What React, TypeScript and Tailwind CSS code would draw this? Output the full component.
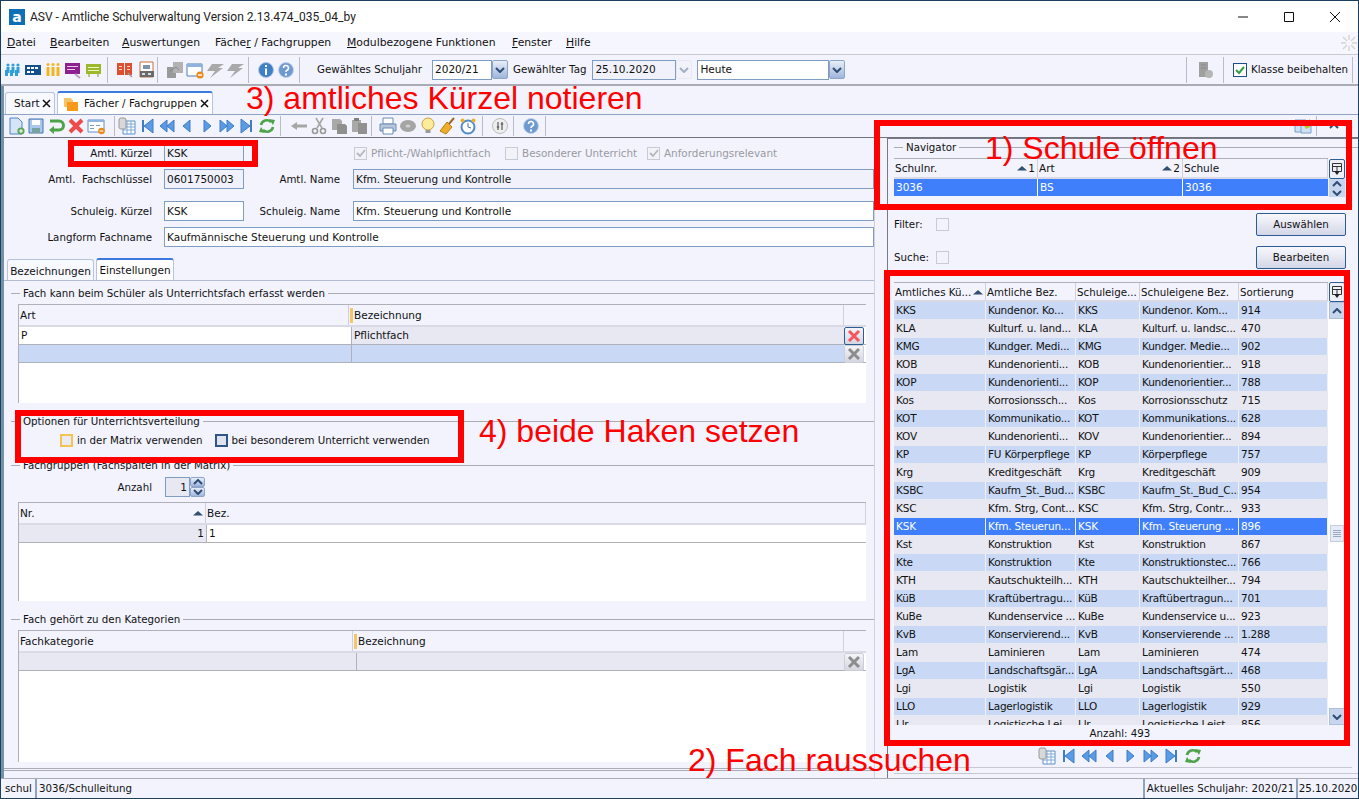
import React from "react";

type IconProps = { children: React.ReactNode; w?: number };

const I = ({ children, w = 18 }: IconProps) => (
    <svg width={w} height={18} viewBox={`0 0 ${w} 18`} className="shrink-0">
        {children}
    </svg>
);

const Blue = "#5b9be6";
const BlueD = "#3f7cc4";

const icons: Record<string, React.ReactNode> = {
    people: <I><g fill="#2f9fd8"><circle cx="4" cy="4" r="1.6" /><circle cx="9" cy="4" r="1.6" /><circle cx="14" cy="4" r="1.6" /><rect x="2.5" y="6" width="3" height="6" /><rect x="7.5" y="6" width="3" height="6" /><rect x="12.5" y="6" width="3" height="6" /><rect x="1" y="9" width="3" height="6" /><rect x="6" y="9" width="3" height="6" /><rect x="11" y="9" width="3" height="6" /></g></I>,
    card: <I><path d="M1 4h16v10H1z" fill="#14508c" /><path d="M3 6h3v2H3zM7 6h3v2H7zM11 6h3v2h-3zM3 10h3v2H3zM7 10h3v2H7z" fill="#fff" /></I>,
    yellow: <I><g fill="#f2b61c"><circle cx="4" cy="3.5" r="1.5" /><circle cx="9" cy="3.5" r="1.5" /><circle cx="14" cy="3.5" r="1.5" /><rect x="2.5" y="6" width="3" height="9" /><rect x="7.5" y="6" width="3" height="9" /><rect x="12.5" y="6" width="3" height="9" /></g></I>,
    purple: <I><path d="M1 2h15v11H1z" fill="#8e1f8e" /><path d="M3 5h11v1H3zM3 8h8v1H3z" fill="#e9c6e9" /><path d="M11 13l5 4" stroke="#b9a0c9" strokeWidth="2" /></I>,
    green: <I><path d="M2 3h15v10H2z" fill="#9cb82c" /><path d="M4 6h11v1H4zM4 9h11v1H4z" fill="#eef4c4" /><path d="M5 13v3M14 13v3" stroke="#7f9a1c" /></I>,
    book: <I><path d="M1 2h7v12H1zM9 2h7v12H9z" fill="#dd4f2e" /><path d="M3 5h3v1H3zM11 5h3v1h-3zM3 8h3v1H3zM11 8h3v1h-3z" fill="#fbd7c8" /><path d="M12 12l4 4" stroke="#9a9a9a" strokeWidth="1.5" /></I>,
    note: <I><path d="M3 1h13v15H3z" fill="#fff" stroke="#c8703c" /><path d="M6 4h7v4H6z" fill="#7f93ad" /><path d="M3 10h14v6H3z" fill="#6a6a6a" /><path d="M5 12h3v2H5zM11 12h3v2h-3z" fill="#ddd" /></I>,
    puzzle: <I><path d="M1 6h9v11H1z" fill="#9a9a9a" /><path d="M7 1h10v11H7z" fill="#b2b2b2" /><path d="M4 10l6-4 3 3" stroke="#8a8a8a" fill="none" /></I>,
    winMinus: <I><path d="M1 3h15v12H1z" fill="#fff" stroke="#4d7fb8" /><path d="M1 3h15v3H1z" fill="#8fb3dd" /><circle cx="14" cy="14" r="3.6" fill="#e98a1c" /><path d="M12 14h4" stroke="#fff" strokeWidth="1.4" /></I>,
    bolt: <I><path d="M6 3h12l-6 4h5L4 17l5-7H1z" fill="#a9a9a9" /></I>,
    info: <I><circle cx="9" cy="9" r="7.5" fill="#3f7fc6" stroke="#b6c9e5" /><path d="M8 7.5h2V14H8zM8 4h2v2H8z" fill="#fff" /></I>,
    help: <I><circle cx="9" cy="9" r="7.5" fill="#6f9ad0" stroke="#c3d3ea" /><path d="M6.5 7a2.5 2.5 0 1 1 3.5 2.3c-.7.3-1 .7-1 1.7" stroke="#fff" strokeWidth="1.6" fill="none" /><path d="M8 12.5h2v2H8z" fill="#fff" /></I>,
    fileNew: <I><path d="M3 1h8l4 4v12H3z" fill="#d5e4f6" stroke="#4f86c4" /><circle cx="14" cy="14" r="3.6" fill="#5aa65a" /><path d="M12 14h4M14 12v4" stroke="#fff" /></I>,
    save: <I><path d="M2 2h14v14H2z" fill="#a9c8ec" stroke="#4577b0" /><path d="M5 3h8v5H5z" fill="#fff" /><path d="M5 11h8v5H5z" fill="#78a2a0" /></I>,
    undo: <I><path d="M3 4h9a4 4 0 0 1 0 9H5" stroke="#4da24a" strokeWidth="3" fill="none" /><path d="M7 9l-5 4 5 4z" fill="#4da24a" /></I>,
    redX: <I><path d="M3 3l12 12M15 3L3 15" stroke="#ee4b4b" strokeWidth="4" /></I>,
    form: <I><path d="M1 3h16v12H1z" fill="#fff" stroke="#5d8fc4" /><path d="M1 3h16v2H1z" fill="#8fb3dd" /><path d="M3 8h4v1H3zM3 11h4v1H3zM9 8h4v1H9z" fill="#7a9cc4" /><circle cx="14.5" cy="14" r="3.3" fill="#e98a1c" /><path d="M12.7 14h3.6" stroke="#fff" /></I>,
    copyTable: <I><path d="M5 4h12v13H5z" fill="#fff" stroke="#5d8fc4" /><path d="M5 7h12M5 10h12M5 13h12M9 4v13M13 4v13" stroke="#7eaad8" /><rect x="1" y="1" width="7" height="11" rx="2" fill="#d8d8d8" stroke="#999" /></I>,
    first: <I><path d="M4 3h2v12H4z" fill={BlueD} /><path d="M15 2v14L6 9z" fill={Blue} stroke={BlueD} /></I>,
    prev2: <I><path d="M9 3v12L2 9zM16 3v12L9 9z" fill={Blue} stroke={BlueD} /></I>,
    prev: <I><path d="M12 3v12L5 9z" fill={Blue} stroke={BlueD} /></I>,
    next: <I><path d="M6 3v12l7-6z" fill={Blue} stroke={BlueD} /></I>,
    next2: <I><path d="M2 3v12l7-6zM9 3v12l7-6z" fill={Blue} stroke={BlueD} /></I>,
    last: <I><path d="M12 3h2v12h-2z" fill={BlueD} /><path d="M3 2v14l9-7z" fill={Blue} stroke={BlueD} /></I>,
    refresh: <I><path d="M3 8a6 6 0 0 1 10-3" stroke="#4da24a" strokeWidth="2.6" fill="none" /><path d="M11 2l6 1-2 5z" fill="#4da24a" /><path d="M15 10a6 6 0 0 1-10 3" stroke="#4da24a" strokeWidth="2.6" fill="none" /><path d="M7 16l-6-1 2-5z" fill="#4da24a" /></I>,
    back: <I><path d="M7 5v8L1 9z" fill="#a6a6a6" /><path d="M6 7.5h11v3H6z" fill="#a6a6a6" /></I>,
    scissors: <I><path d="M13 1L7 11M6 1l6 10" stroke="#a6a6a6" strokeWidth="1.6" /><circle cx="5" cy="14" r="2.5" fill="none" stroke="#999" strokeWidth="1.6" /><circle cx="13" cy="14" r="2.5" fill="none" stroke="#999" strokeWidth="1.6" /></I>,
    copy: <I><path d="M2 2h8l2 2v9H2z" fill="#a9a9a9" /><path d="M7 7h8l2 2v8H7z" fill="#8f8f8f" /></I>,
    paste: <I><path d="M2 3h9v12H2z" fill="#a9a9a9" /><path d="M8 6h9v11H8z" fill="#919191" /><path d="M4 1h5v3H4z" fill="#7f7f7f" /></I>,
    printer: <I><path d="M4 1h10v6H4z" fill="#fff" stroke="#6c8cb4" /><path d="M1 7h16v7H1z" fill="#b7c6da" stroke="#6c8cb4" /><path d="M4 11h10v6H4z" fill="#fff" stroke="#6c8cb4" /></I>,
    disc: <I><ellipse cx="9" cy="9" rx="8" ry="6" fill="#a5a5a5" /><ellipse cx="9" cy="9" rx="2.5" ry="1.6" fill="#cfcfcf" /></I>,
    bulb: <I><circle cx="9" cy="7" r="6" fill="#fdeb9c" stroke="#c9a33a" /><path d="M6.5 13h5v3h-5z" fill="#9a9a9a" /></I>,
    broom: <I><path d="M15 1L9 8" stroke="#9a6a2a" strokeWidth="2" /><path d="M8 5l5 5-6 7-6-3z" fill="#eeae2c" stroke="#b87e14" /></I>,
    clock: <I><circle cx="9" cy="10" r="6.5" fill="#fff" stroke="#4f8cc9" strokeWidth="2" /><path d="M9 6v4l3 1" stroke="#4f6f94" fill="none" /><circle cx="3.5" cy="3.5" r="2" fill="#eeae2c" /><circle cx="14.5" cy="3.5" r="2" fill="#eeae2c" /></I>,
    sliders: <I><circle cx="9" cy="9" r="7.5" fill="#eee" stroke="#bbb" /><path d="M7 5v8M11 5v8" stroke="#666" strokeWidth="1.3" /><path d="M5.8 10h2.4M9.8 7h2.4" stroke="#666" strokeWidth="1.5" /></I>,
    server: <I><path d="M3 1h9v15H3z" fill="#a0a0a0" /><circle cx="13" cy="13" r="4" fill="#b5b5b5" /><path d="M5 4h5M5 7h5" stroke="#8a8a8a" /></I>,
    panel: <I><path d="M1 3h11v12H1z" fill="#cfe0f4" stroke="#7ba0cc" /><path d="M7 6h10v10H7z" fill="#cfe0f4" stroke="#7ba0cc" /><path d="M9 7l7-5v8l-4 2z" fill="#b9c93a" /></I>,
};

const Sep = ({ h = "h-[26px]", m = "" }: { h?: string; m?: string }) => (
    <div className={`w-px shrink-0 bg-[#b9bbc6] ${h} ${m}`} />
);

const IconRow = ({ names, cell = "w-5" }: { names: string[]; cell?: string }) => (
    <div className="flex shrink-0 items-center">
        {names.map((n, i) => (
            <span key={i} className={`flex justify-center ${cell}`}>{icons[n]}</span>
        ))}
    </div>
);

const Chevron = ({ up = false }: { up?: boolean }) => (
    <svg width="10" height="6" viewBox="0 0 10 6">
        <path d={up ? "M1 5l4-4 4 4" : "M1 1l4 4 4-4"} stroke="#2f4d73" strokeWidth="2" fill="none" />
    </svg>
);

const ComboBtn = ({ off = false }: { off?: boolean }) => (
    <span className={`flex h-[19px] w-[16px] shrink-0 items-center justify-center rounded-[2px] border ${off ? "border-[#d7d9e3] bg-[#f0f1f8] opacity-40" : "border-[#8ea5c8] bg-linear-to-b from-[#e8eef9] to-[#9fb5dc]"}`}>
        <Chevron />
    </span>
);

const Field = ({ w, text, off = false, ml = "" }: { w: string; text: string; off?: boolean; ml?: string }) => (
    <div className={`flex h-[20px] shrink-0 items-center border border-[#7f9cc2] pl-[2px] whitespace-nowrap ${off ? "bg-[#f0f1fb]" : "bg-white"} ${w} ${ml}`}>
        {text}
    </div>
);

const Menu = ({ pre, u, post, w }: { pre?: string; u: string; post: string; w: string }) => (
    <span className={`shrink-0 whitespace-nowrap ${w}`}>{pre}<span className="underline">{u}</span>{post}</span>
);

const Legend = ({ text, mt = "" }: { text: string; mt?: string }) => (
    <div className={`flex h-[12px] items-center gap-[3px] pl-[7px] text-[10.25px] ${mt}`}>
        <span className="h-px w-[9px] bg-[#a9abb5]" />
        <span className="whitespace-nowrap">{text}</span>
        <span className="h-px flex-1 bg-[#a9abb5]" />
    </div>
);

const Disabled = ({ text, checked = false, w }: { text: string; checked?: boolean; w: string }) => (
    <>
        <span className="flex h-[13px] w-[13px] shrink-0 items-center justify-center border border-[#c8cad4] bg-[#f2f3f9]">
            {checked && (
                <svg width="10" height="10" viewBox="0 0 10 10"><path d="M1 5l3 3 5-6" stroke="#b4b6bf" strokeWidth="1.8" fill="none" /></svg>
            )}
        </span>
        <span className={`ml-[4px] shrink-0 whitespace-nowrap text-[10.4px] text-[#9a9a9f] ${w}`}>{text}</span>
    </>
);

const CellX = ({ red = false }: { red?: boolean }) => (
    <span className={`flex h-[18px] w-[20px] shrink-0 items-center justify-center rounded-[2px] border bg-linear-to-b from-[#f4f4f8] to-[#d4d6e0] ${red ? "border-[#2c5c94]" : "border-[#ccced8]"}`}>
        <svg width="14" height="14" viewBox="0 0 14 14">
            <path d="M2 2l10 10M12 2L2 12" stroke={red ? "#f4555f" : "#8c8c8c"} strokeWidth="3" />
        </svg>
    </span>
);

const HeadCell = ({ w, text, mark = false, sort }: { w: string; text: string; mark?: boolean; sort?: string }) => (
    <div className={`flex h-full shrink-0 items-center whitespace-nowrap overflow-hidden border-r border-[#cfd0da] pl-px ${w}`}>
        {mark && <span className="mr-[1px] h-[15px] w-[3px] shrink-0 bg-[#f6c667]" />}
        <span className="flex-1 overflow-hidden leading-[14px]">{text}</span>
        {sort !== undefined && (
            <span className="flex shrink-0 items-center gap-px pr-[2px]">
                <svg width="10" height="6" viewBox="0 0 10 6"><path d="M0 5.5L5 1l5 4.5z" fill="#33506e" /></svg>
                {sort}
            </span>
        )}
    </div>
);

const ColumnBtn = () => (
    <span className="flex h-[20px] w-[16px] shrink-0 items-center justify-center rounded-[2px] border border-[#2c5c94] bg-[#eef0f8]">
        <svg width="12" height="14" viewBox="0 0 12 14">
            <path d="M1.5 1.5h9v8h-9zM1.5 4.5h9M6 4.5v5" stroke="#333" fill="none" />
            <path d="M3 9h6l-3 4z" fill="#222" />
        </svg>
    </span>
);

const rows = [
    ["KKS", "Kundenor. Ko...", "KKS", "Kundenor. Kom...", "914"],
    ["KLA", "Kulturf. u. land...", "KLA", "Kulturf. u. landsc...", "470"],
    ["KMG", "Kundger. Medi...", "KMG", "Kundger. Medie...", "902"],
    ["KOB", "Kundenorienti...", "KOB", "Kundenorientier...", "918"],
    ["KOP", "Kundenorienti...", "KOP", "Kundenorientier...", "788"],
    ["Kos", "Korrosionssch...", "Kos", "Korrosionsschutz", "715"],
    ["KOT", "Kommunikatio...", "KOT", "Kommunikations...", "628"],
    ["KOV", "Kundenorienti...", "KOV", "Kundenorientier...", "894"],
    ["KP", "FU Körperpflege", "KP", "Körperpflege", "757"],
    ["Krg", "Kreditgeschäft", "Krg", "Kreditgeschäft", "909"],
    ["KSBC", "Kaufm_St._Bud...", "KSBC", "Kaufm_St._Bud_C...", "954"],
    ["KSC", "Kfm. Strg, Cont...", "KSC", "Kfm. Strg, Contr...", "933"],
    ["KSK", "Kfm. Steuerun...", "KSK", "Kfm. Steuerung ...", "896"],
    ["Kst", "Konstruktion", "Kst", "Konstruktion", "867"],
    ["Kte", "Konstruktion", "Kte", "Konstruktionstec...", "766"],
    ["KTH", "Kautschukteilh...", "KTH", "Kautschukteilher...", "794"],
    ["KüB", "Kraftübertragu...", "KüB", "Kraftübertragun...", "701"],
    ["KuBe", "Kundenservice ...", "KuBe", "Kundenservice u...", "923"],
    ["KvB", "Konservierend...", "KvB", "Konservierende ...", "1.288"],
    ["Lam", "Laminieren", "Lam", "Laminieren", "474"],
    ["LgA", "Landschaftsgär...", "LgA", "Landschaftsgärt...", "468"],
    ["Lgi", "Logistik", "Lgi", "Logistik", "550"],
    ["LLO", "Lagerlogistik", "LLO", "Lagerlogistik", "929"],
    ["Llr", "Logistische Lei...", "Llr", "Logistische Leist...", "856"],
];

const colW = ["w-[92px]", "w-[90px]", "w-[64px]", "w-[99px]", "w-[89px]"];

const ListRow = ({ row, index }: { row: string[]; index: number }) => {
    const selected = row[0] === "KSK";
    const blue = index % 2 === 0;
    const bg = selected ? "bg-[#3f7ffb] text-white" : blue ? "bg-[#c9d9f5]" : "bg-[#e7e8f2]";
    return (
        <div className="flex h-[18px] shrink-0 bg-[#e7e8f2]">
            {row.map((c, i) => (
                <div key={i} className={`flex h-[17px] shrink-0 items-center whitespace-nowrap overflow-hidden pl-[2px] tracking-[-0.2px] ${blue ? "border-r border-[#eef1fa]" : ""} ${colW[i]} ${bg}`}>
                    {c}
                </div>
            ))}
        </div>
    );
};

const Frame = ({ cls }: { cls: string }) => (
    <div className={`pointer-events-none absolute border-[6px] border-[#ff0000] ${cls}`} />
);

const Note = ({ text, cls }: { text: string; cls: string }) => (
    <div className={`absolute font-['Liberation_Sans'] text-[32px] leading-[36px] whitespace-nowrap text-[#ff0000] ${cls}`}>{text}</div>
);

export default function App() {
    return (
        <div className="relative flex h-[799px] w-[1359px] flex-col overflow-hidden border border-[#1c3f5f] bg-[#f2f3fd] font-['DejaVu_Sans',sans-serif] text-[10.5px] leading-none text-[#111]">
            {/* title bar */}
            <div className="flex h-[31px] shrink-0 items-center bg-white">
                <span className="ml-[8px] flex h-[16px] w-[16px] items-center justify-center bg-[#0f6fb5] text-[14px] font-bold text-white">a</span>
                <span className="ml-[5px] font-['Roboto'] text-[12px] whitespace-nowrap text-[#222]">ASV - Amtliche Schulverwaltung Version 2.13.474_035_04_by</span>
                <div className="ml-auto flex items-center">
                    <span className="flex w-[46px] justify-center"><svg width="12" height="12" viewBox="0 0 12 12"><path d="M1 6h10" stroke="#111" /></svg></span>
                    <span className="flex w-[46px] justify-center"><svg width="12" height="12" viewBox="0 0 12 12"><path d="M1.5 1.5h9v9h-9z" stroke="#111" fill="none" /></svg></span>
                    <span className="flex w-[46px] justify-center"><svg width="12" height="12" viewBox="0 0 12 12"><path d="M1 1l10 10M11 1L1 11" stroke="#111" /></svg></span>
                </div>
            </div>

            {/* menu */}
            <div className="flex h-[23px] shrink-0 items-center border-b border-[#c8c9d3] bg-[#f6f6fe] pl-[6px] text-[10.8px]">
                <Menu u="D" post="atei" w="w-[43px]" />
                <Menu u="B" post="earbeiten" w="w-[72px]" />
                <Menu u="A" post="uswertungen" w="w-[93px]" />
                <Menu pre="Fäche" u="r" post=" / Fachgruppen" w="w-[132px]" />
                <Menu u="M" post="odulbezogene Funktionen" w="w-[165px]" />
                <Menu u="F" post="enster" w="w-[54px]" />
                <Menu u="H" post="ilfe" w="w-[40px]" />
                <svg width="16" height="16" viewBox="0 0 16 16" className="ml-auto mr-[1px]">
                    <path d="M8 0v5M8 11v5M0 8h5M11 8h5M2 2l4 4M10 10l4 4M14 2l-4 4M6 10l-4 4" stroke="#d4d4d4" strokeWidth="1.4" />
                </svg>
            </div>

            {/* main toolbar */}
            <div className="flex h-[31px] shrink-0 items-center border-b-2 border-[#a9abb5] bg-[#f2f3fd] pl-[2px]">
                <IconRow names={["people", "card", "yellow", "purple", "green"]} />
                <Sep m="ml-[4px] mr-[6px]" />
                <IconRow names={["book", "note"]} cell="w-[21px]" />
                <Sep m="ml-[1px] mr-[7px]" />
                <IconRow names={["puzzle", "winMinus", "bolt", "bolt"]} />
                <Sep m="ml-[3px] mr-[7px]" />
                <IconRow names={["info", "help"]} />
                <Sep m="ml-[3px] mr-[17px]" />
                <span className="text-[10.25px] whitespace-nowrap">Gewähltes Schuljahr</span>
                <Field w="w-[60px]" text="2020/21" ml="ml-[10px]" />
                <ComboBtn />
                <span className="ml-[5px] text-[10.25px] whitespace-nowrap">Gewählter Tag</span>
                <Field w="w-[84px]" text="25.10.2020" off ml="ml-[6px]" />
                <ComboBtn off />
                <Field w="w-[132px]" text="Heute" ml="ml-[5px]" />
                <ComboBtn />
                <Sep m="ml-auto" />
                <span className="flex w-[36px] justify-center">{icons.server}</span>
                <Sep />
                <span className="ml-[9px] flex h-[14px] w-[14px] items-center justify-center border border-[#1f4f8a] bg-white">
                    <svg width="10" height="10" viewBox="0 0 10 10"><path d="M1 5l3 3 5-6" stroke="#2ea043" strokeWidth="2" fill="none" /></svg>
                </span>
                <span className="ml-[4px] w-[95px] text-[10.25px] whitespace-nowrap">Klasse beibehalten</span>
                <Sep m="ml-[6px] mr-[5px]" />
            </div>

            <div className="flex min-h-0 flex-1">
                {/* teal splitter on the left */}
                <div className="w-[3px] shrink-0 border-r border-[#7f8f9f] bg-[#6f92a6]" />

                <div className="flex min-w-0 flex-1 flex-col">
                    {/* document tabs */}
                    <div className="flex h-[29px] shrink-0 items-end gap-[2px] border-b border-[#8ea3c4] pl-[1px]">
                        <div className="flex h-[22px] w-[50px] items-center gap-[2px] rounded-t-[3px] border border-b-0 border-[#b7c4dc] bg-[#f8f8ff] pl-[8px]">
                            Start
                            <svg width="9" height="9" viewBox="0 0 9 9"><path d="M1 1l7 7M8 1L1 8" stroke="#111" strokeWidth="1.5" /></svg>
                        </div>
                        <div className="flex h-[23px] w-[156px] items-center rounded-t-[3px] border border-b-0 border-[#b7c4dc] border-t-2 border-t-[#3b78e0] bg-white pl-[6px]">
                            <svg width="15" height="14" viewBox="0 0 15 14" className="mr-[5px]"><path d="M0 1h7l1 2h1v7H0z" fill="#f6c467" /><path d="M3 5h11v9H3z" fill="#f79a1b" /></svg>
                            <span className="whitespace-nowrap">Fächer / Fachgruppen</span>
                            <svg width="9" height="9" viewBox="0 0 9 9" className="ml-[3px]"><path d="M1 1l7 7M8 1L1 8" stroke="#111" strokeWidth="1.5" /></svg>
                        </div>
                    </div>

                    {/* record toolbar */}
                    <div className="flex h-[23px] shrink-0 items-center border-b border-[#6f7380] pl-[2px]">
                        <IconRow names={["fileNew", "save", "undo", "redX", "form"]} />
                        <Sep h="h-[20px]" m="ml-[8px] mr-[2px]" />
                        <IconRow names={["copyTable", "first", "prev2", "prev", "next", "next2", "last", "refresh"]} />
                        <Sep h="h-[20px]" m="ml-[3px] mr-[8px]" />
                        <IconRow names={["back", "scissors", "copy", "paste"]} />
                        <Sep h="h-[20px]" m="ml-[2px] mr-[6px]" />
                        <IconRow names={["printer", "disc", "bulb", "broom", "clock"]} />
                        <Sep h="h-[20px]" m="ml-[4px] mr-[7px]" />
                        <IconRow names={["sliders"]} />
                        <Sep h="h-[20px]" m="ml-[3px] mr-[7px]" />
                        <IconRow names={["help"]} />
                        <Sep h="h-[20px]" m="ml-[4px]" />
                        <div className="ml-auto flex items-center pr-[7px]">
                            <span className="flex w-[20px] justify-center">{icons.panel}</span>
                            <Sep h="h-[20px]" m="ml-[3px]" />
                            <span className="flex w-[34px] justify-center"><Chevron up /></span>
                        </div>
                    </div>

                    <div className="flex min-h-0 flex-1">
                        {/* left form */}
                        <div className="flex w-[871px] shrink-0 flex-col border-r border-[#d0d2de]">
                            <div className="mt-[5px] flex h-[20px] items-center">
                                <span className="w-[148px] text-right text-[10.25px]">Amtl. Kürzel</span>
                                <Field w="w-[80px]" text="KSK" off ml="ml-[12px]" />
                                <span className="ml-[110px] flex items-center">
                                    <Disabled text="Pflicht-/Wahlpflichtfach" checked w="w-[134px]" />
                                    <Disabled text="Besonderer Unterricht" w="w-[125px]" />
                                    <Disabled text="Anforderungsrelevant" checked w="w-[120px]" />
                                </span>
                            </div>
                            <div className="mt-[6px] flex h-[20px] items-center">
                                <span className="w-[148px] text-right text-[10.25px]">Amtl.&nbsp; Fachschlüssel</span>
                                <Field w="w-[80px]" text="0601750003" off ml="ml-[12px]" />
                                <span className="w-[96px] text-right text-[10.25px]">Amtl. Name</span>
                                <Field w="flex-1" text="Kfm. Steuerung und Kontrolle" off ml="ml-[13px]" />
                            </div>
                            <div className="mt-[12px] flex h-[20px] items-center">
                                <span className="w-[148px] text-right text-[10.25px]">Schuleig. Kürzel</span>
                                <Field w="w-[80px]" text="KSK" ml="ml-[12px]" />
                                <span className="w-[96px] text-right text-[10.25px]">Schuleig. Name</span>
                                <Field w="flex-1" text="Kfm. Steuerung und Kontrolle" ml="ml-[13px]" />
                            </div>
                            <div className="mt-[6px] flex h-[20px] items-center">
                                <span className="w-[148px] text-right text-[10.25px]">Langform Fachname</span>
                                <Field w="flex-1" text="Kaufmännische Steuerung und Kontrolle" ml="ml-[12px]" />
                            </div>

                            {/* sub tabs */}
                            <div className="mt-[11px] flex h-[23px] shrink-0 items-end gap-[2px] border-b border-[#b3bdd2] pl-[3px]">
                                <div className="flex h-[21px] w-[87px] items-center justify-center rounded-t-[3px] border border-b-0 border-[#b7c4dc] bg-[#f8f8ff] pt-[3px]">Bezeichnungen</div>
                                <div className="flex h-[22px] w-[78px] items-center justify-center rounded-t-[3px] border border-b-0 border-[#b7c4dc] border-t-2 border-t-[#3b78e0] bg-white">Einstellungen</div>
                            </div>

                            <Legend text="Fach kann beim Schüler als Unterrichtsfach erfasst werden" mt="mt-[6px]" />
                            <div className="mt-[5px] ml-[14px] flex h-[99px] w-[848px] shrink-0 flex-col border-t border-l border-[#aeb0ba] bg-white">
                                <div className="flex h-[22px] shrink-0 items-center border-b-2 border-[#d9dae6] bg-[#f2f3fd]">
                                    <HeadCell w="w-[330px]" text="Art" />
                                    <HeadCell w="w-[495px]" text="Bezeichnung" mark />
                                </div>
                                <div className="flex h-[18px] shrink-0 border-b border-[#aeb0ba]">
                                    <div className="flex w-[333px] items-center border-r border-[#aeb0ba] pl-[2px]">P</div>
                                    <div className="flex w-[492px] items-center bg-[#e7e8f2] pl-[2px]">Pflichtfach</div>
                                    <CellX red />
                                </div>
                                <div className="flex h-[18px] shrink-0 border-b border-[#aeb0ba]">
                                    <div className="w-[333px] border-r border-[#aeb0ba] bg-[#c9d9f5]" />
                                    <div className="w-[492px] bg-[#c9d9f5]" />
                                    <CellX />
                                </div>
                            </div>

                            <Legend text="Optionen für Unterrichtsverteilung" mt="mt-[12px]" />
                            <div className="mt-[6px] flex h-[14px] items-center pl-[56px] text-[10.25px]">
                                <span className="h-[13px] w-[13px] border-2 border-[#f3c354] bg-[#e9ebf4]" />
                                <span className="ml-[4px]">in der Matrix verwenden</span>
                                <span className="ml-[12px] h-[13px] w-[13px] border-2 border-[#2f5687] bg-[#dfe3ef]" />
                                <span className="ml-[4px]">bei besonderem Unterricht verwenden</span>
                            </div>

                            <Legend text="Fachgruppen (Fachspalten in der Matrix)" mt="mt-[12px]" />
                            <div className="mt-[6px] flex h-[20px] items-center">
                                <span className="w-[148px] text-right text-[10.25px]">Anzahl</span>
                                <div className="ml-[13px] flex h-[20px] w-[25px] items-center justify-end border border-[#7f9cc2] bg-[#e7e8f2] pr-[2px]">1</div>
                                <div className="flex flex-col">
                                    <span className="flex h-[10px] w-[15px] items-center justify-center rounded-[2px] border border-[#8ea5c8] bg-linear-to-b from-[#e8eef9] to-[#9fb5dc]"><Chevron up /></span>
                                    <span className="flex h-[10px] w-[15px] items-center justify-center rounded-[2px] border border-[#8ea5c8] bg-linear-to-b from-[#e8eef9] to-[#9fb5dc]"><Chevron /></span>
                                </div>
                            </div>
                            <div className="mt-[5px] ml-[14px] flex h-[99px] w-[848px] shrink-0 flex-col border-t border-l border-[#aeb0ba] bg-white">
                                <div className="flex h-[22px] shrink-0 items-center border-b-2 border-[#d9dae6] bg-[#f2f3fd]">
                                    <HeadCell w="w-[187px]" text="Nr." sort="" />
                                    <HeadCell w="w-[660px]" text="Bez." />
                                </div>
                                <div className="flex h-[18px] shrink-0 border-b border-[#aeb0ba]">
                                    <div className="flex w-[188px] items-center justify-end border-r border-[#aeb0ba] bg-[#e7e8f2] pr-[2px]">1</div>
                                    <div className="flex flex-1 items-center pl-[2px]">1</div>
                                </div>
                            </div>

                            <Legend text="Fach gehört zu den Kategorien" mt="mt-[12px]" />
                            <div className="mt-[5px] ml-[14px] flex h-[132px] w-[848px] shrink-0 flex-col border-t border-l border-[#aeb0ba] bg-white">
                                <div className="flex h-[22px] shrink-0 items-center border-b-2 border-[#d9dae6] bg-[#f2f3fd]">
                                    <HeadCell w="w-[334px]" text="Fachkategorie" />
                                    <HeadCell w="w-[491px]" text="Bezeichnung" mark />
                                </div>
                                <div className="flex h-[18px] shrink-0 border-b border-[#aeb0ba]">
                                    <div className="w-[338px] border-r border-[#aeb0ba] bg-[#e7e8f2]" />
                                    <div className="w-[487px] bg-[#e7e8f2]" />
                                    <CellX />
                                </div>
                            </div>
                            <div className="mt-[6px] h-[3px] border-y border-[#a9abb5]" />
                        </div>

                        {/* right navigator */}
                        <div className="flex min-w-0 flex-1 flex-col pl-[12px]">
                            <div className="flex min-h-0 flex-1 flex-col border-t border-l border-[#777a86] pl-[6px]">
                                <div className="mt-[2px] flex h-[12px] items-center gap-[3px] text-[10.25px]">
                                    <span className="h-px w-[9px] bg-[#a9abb5]" />
                                    Navigator
                                    <span className="h-px flex-1 bg-[#a9abb5]" />
                                </div>
                                <div className="mt-[5px] flex h-[21px] w-[452px] shrink-0 items-center">
                                    <div className="flex h-[21px] w-[434px] border-b-2 border-[#d9dae6] border-t border-t-[#aeb0ba]">
                                        <HeadCell w="w-[144px]" text="Schulnr." sort="1" />
                                        <HeadCell w="w-[145px]" text="Art" sort="2" />
                                        <HeadCell w="w-[145px]" text="Schule" />
                                    </div>
                                    <span className="ml-[1px]"><ColumnBtn /></span>
                                </div>
                                <div className="flex h-[18px] w-[452px] shrink-0">
                                    <div className="flex h-[17px] w-[434px] bg-[#3f7ffb] text-white">
                                        <span className="flex w-[144px] items-center border-r border-white pl-[2px]">3036</span>
                                        <span className="flex w-[145px] items-center border-r border-white pl-[2px]">BS</span>
                                        <span className="flex w-[145px] items-center pl-[2px]">3036</span>
                                    </div>
                                    <div className="ml-[1px] flex flex-col">
                                        <span className="flex h-[9px] w-[16px] items-center justify-center bg-[#c7d6ee]"><Chevron up /></span>
                                        <span className="flex h-[9px] w-[16px] items-center justify-center bg-[#c7d6ee]"><Chevron /></span>
                                    </div>
                                </div>

                                <div className="mt-[15px] flex h-[24px] w-[452px] shrink-0 items-center text-[10.25px]">
                                    <span className="w-[42px]">Filter:</span>
                                    <span className="h-[13px] w-[13px] border border-[#c8cad4]" />
                                    <span className="ml-auto flex h-[23px] w-[90px] items-center justify-center rounded-[2px] border border-[#2c5c94] bg-linear-to-b from-[#f8f8fd] to-[#d3d6e6]">Auswählen</span>
                                </div>
                                <div className="mt-[9px] flex h-[24px] w-[452px] shrink-0 items-center text-[10.25px]">
                                    <span className="w-[42px]">Suche:</span>
                                    <span className="h-[13px] w-[13px] border border-[#c8cad4]" />
                                    <span className="ml-auto flex h-[23px] w-[90px] items-center justify-center rounded-[2px] border border-[#2c5c94] bg-linear-to-b from-[#f8f8fd] to-[#d3d6e6]">Bearbeiten</span>
                                </div>

                                <div className="mt-[13px] flex h-[20px] w-[452px] shrink-0 items-center">
                                    <div className="flex h-[20px] w-[434px] border-b-2 border-[#d9dae6] border-t border-t-[#aeb0ba] text-[10.25px]">
                                        <HeadCell w="w-[92px]" text="Amtliches Kü..." sort="" />
                                        <HeadCell w="w-[90px]" text="Amtliche Bez." />
                                        <HeadCell w="w-[64px]" text="Schuleige..." />
                                        <HeadCell w="w-[99px]" text="Schuleigene Bez." />
                                        <HeadCell w="w-[89px]" text="Sortierung" />
                                    </div>
                                    <span className="ml-[1px]"><ColumnBtn /></span>
                                </div>

                                <div className="flex h-[423px] w-[452px] shrink-0 bg-white">
                                    <div className="flex w-[434px] flex-col overflow-hidden">
                                        {rows.map((r, i) => <ListRow key={r[0]} row={r} index={i} />)}
                                    </div>
                                    <div className="ml-[1px] flex w-[16px] flex-col items-center">
                                        <span className="flex h-[17px] w-[16px] items-center justify-center border border-[#aebfdc] bg-[#c7d6ee]"><Chevron up /></span>
                                        <span className="mt-[206px] flex h-[17px] w-[14px] flex-col items-center justify-center gap-px border border-[#c5cede] bg-[#e6ebf5]">
                                            <span className="h-px w-[8px] bg-[#9aa8c0]" />
                                            <span className="h-px w-[8px] bg-[#9aa8c0]" />
                                            <span className="h-px w-[8px] bg-[#9aa8c0]" />
                                            <span className="h-px w-[8px] bg-[#9aa8c0]" />
                                        </span>
                                        <span className="mt-auto flex h-[17px] w-[16px] items-center justify-center border border-[#aebfdc] bg-[#c7d6ee]"><Chevron /></span>
                                    </div>
                                </div>
                                <div className="flex h-[17px] w-[452px] shrink-0 items-center justify-center text-[10.25px]">Anzahl: 493</div>

                                <div className="mt-[4px] flex h-[20px] w-[452px] shrink-0 items-center justify-center">
                                    <IconRow names={["copyTable", "first", "prev2", "prev", "next", "next2", "last", "refresh"]} cell="w-[20.8px]" />
                                </div>
                                <div className="mt-[1px] h-px w-[458px] bg-[#c5c7d2]" />
                                <div className="mt-[5px] h-px w-[464px] bg-[#c5c7d2]" />
                            </div>
                        </div>
                    </div>
                </div>
            </div>

            {/* status bar */}
            <div className="flex h-[20px] shrink-0 items-center border-t border-[#a9abb5] bg-[#f2f3fd] text-[10.25px]">
                <span className="flex h-full w-[34px] items-center pl-[4px]">schul</span>
                <span className="flex h-full flex-1 items-center border-l-2 border-[#8ea3c4] pl-[2px]">3036/Schulleitung</span>
                <span className="flex h-full w-[155px] items-center justify-center border-x-2 border-[#8ea3c4]">Aktuelles Schuljahr: 2020/21</span>
                <span className="flex h-full w-[60px] items-center justify-center">25.10.2020</span>
            </div>

            {/* annotations drawn over the screenshot */}
            <Frame cls="left-[67px] top-[139px] h-[27px] w-[190px]" />
            <Frame cls="left-[873px] top-[119px] h-[90px] w-[478px]" />
            <Frame cls="left-[883px] top-[269px] h-[476px] w-[466px]" />
            <Frame cls="left-[14px] top-[409px] h-[53px] w-[449px]" />
            <Note text="3) amtliches Kürzel notieren" cls="left-[245px] top-[79px]" />
            <Note text="1) Schule öffnen" cls="left-[984px] top-[129px]" />
            <Note text="4) beide Haken setzen" cls="left-[478px] top-[412px]" />
            <Note text="2) Fach raussuchen" cls="left-[687px] top-[741px]" />
        </div>
    );
}
